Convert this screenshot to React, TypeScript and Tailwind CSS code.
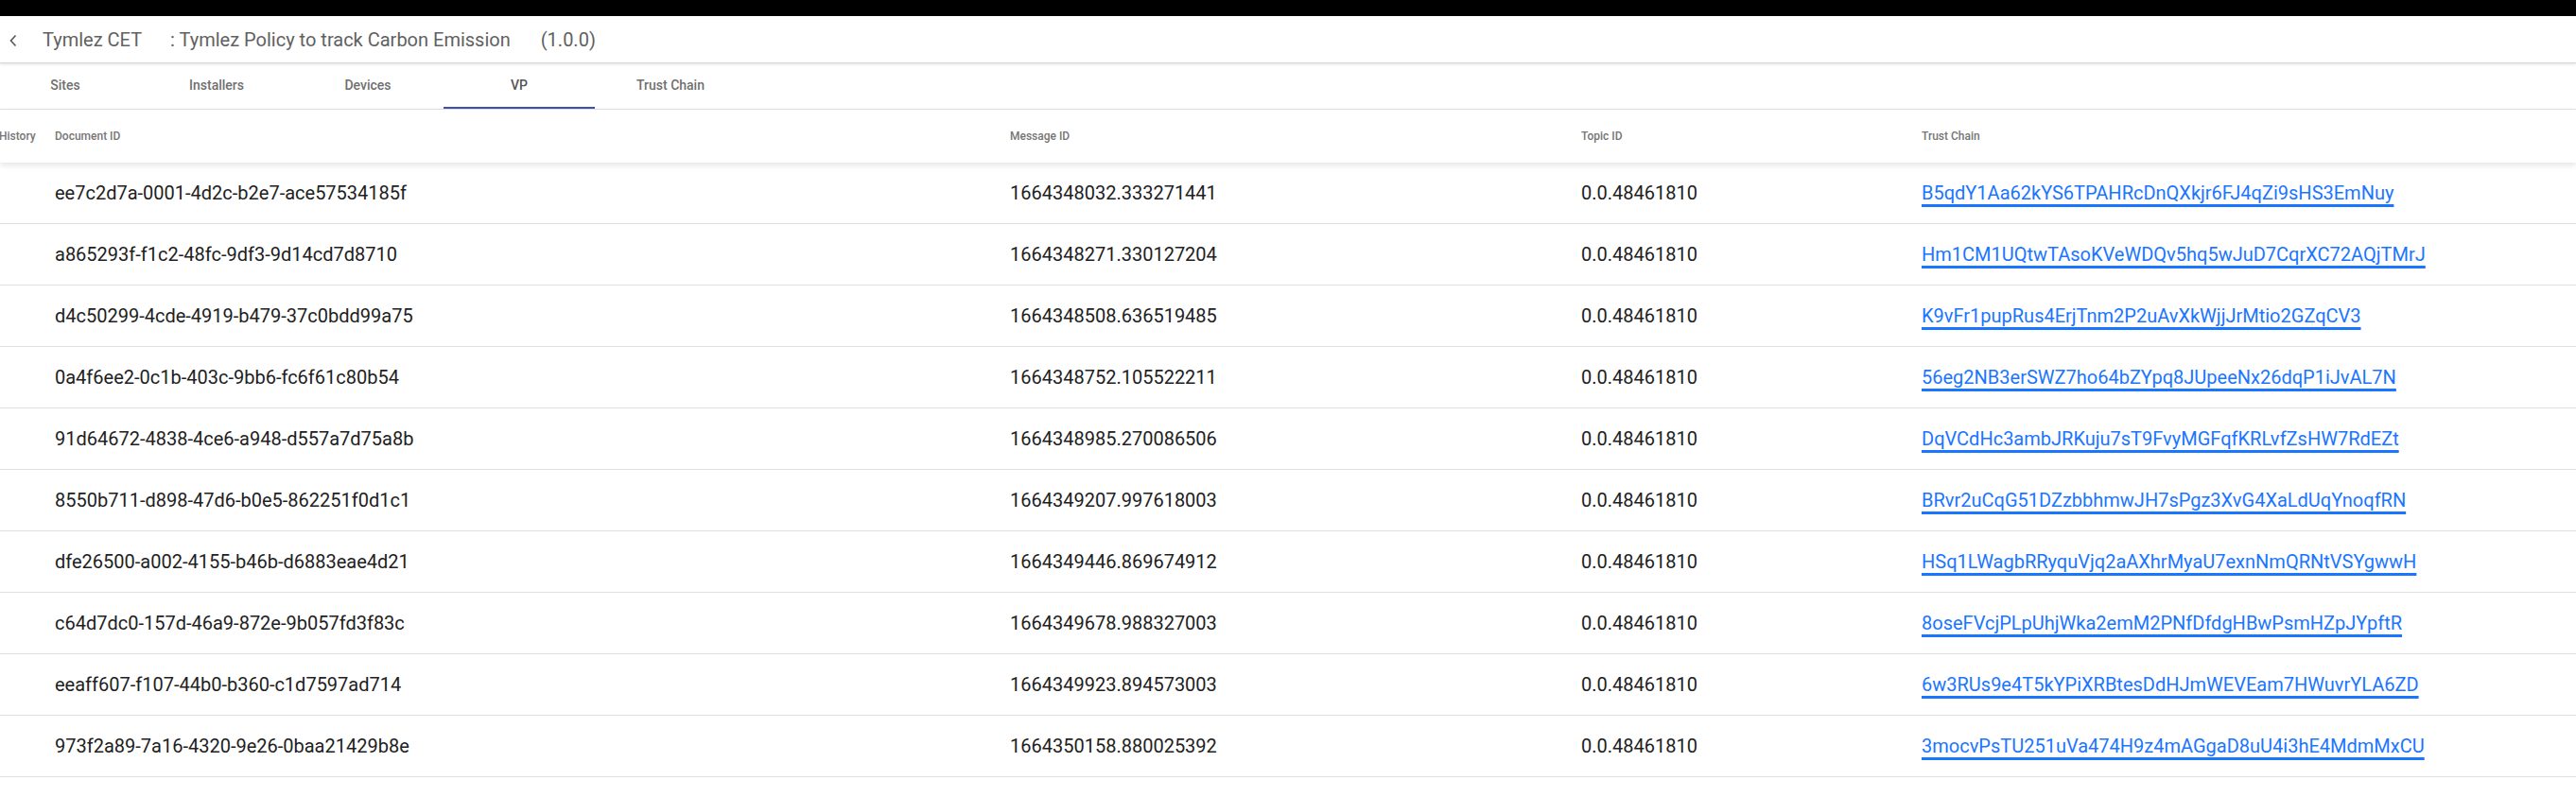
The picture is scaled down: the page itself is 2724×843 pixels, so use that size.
import React from 'react';

const TABS = ['Sites', 'Installers', 'Devices', 'VP', 'Trust Chain'];
const ACTIVE_TAB = 'VP';
const TOPIC = '0.0.48461810';

const ROWS = [
    ['ee7c2d7a-0001-4d2c-b2e7-ace57534185f', '1664348032.333271441', 'B5qdY1Aa62kYS6TPAHRcDnQXkjr6FJ4qZi9sHS3EmNuy'],
    ['a865293f-f1c2-48fc-9df3-9d14cd7d8710', '1664348271.330127204', 'Hm1CM1UQtwTAsoKVeWDQv5hq5wJuD7CqrXC72AQjTMrJ'],
    ['d4c50299-4cde-4919-b479-37c0bdd99a75', '1664348508.636519485', 'K9vFr1pupRus4ErjTnm2P2uAvXkWjjJrMtio2GZqCV3'],
    ['0a4f6ee2-0c1b-403c-9bb6-fc6f61c80b54', '1664348752.105522211', '56eg2NB3erSWZ7ho64bZYpq8JUpeeNx26dqP1iJvAL7N'],
    ['91d64672-4838-4ce6-a948-d557a7d75a8b', '1664348985.270086506', 'DqVCdHc3ambJRKuju7sT9FvyMGFqfKRLvfZsHW7RdEZt'],
    ['8550b711-d898-47d6-b0e5-862251f0d1c1', '1664349207.997618003', 'BRvr2uCqG51DZzbbhmwJH7sPgz3XvG4XaLdUqYnoqfRN'],
    ['dfe26500-a002-4155-b46b-d6883eae4d21', '1664349446.869674912', 'HSq1LWagbRRyquVjq2aAXhrMyaU7exnNmQRNtVSYgwwH'],
    ['c64d7dc0-157d-46a9-872e-9b057fd3f83c', '1664349678.988327003', '8oseFVcjPLpUhjWka2emM2PNfDfdgHBwPsmHZpJYpftR'],
    ['eeaff607-f107-44b0-b360-c1d7597ad714', '1664349923.894573003', '6w3RUs9e4T5kYPiXRBtesDdHJmWEVEam7HWuvrYLA6ZD'],
    ['973f2a89-7a16-4320-9e26-0baa21429b8e', '1664350158.880025392', '3mocvPsTU251uVa474H9z4mAGgaD8uU4i3hE4MdmMxCU'],
];

const COLS = 'grid grid-cols-[58px_1010px_604px_360px_1fr]';

export default function App() {
    return (
        <div className="w-full h-[843px] bg-white overflow-hidden font-['Roboto',sans-serif]">
            {/* window strip */}
            <div className="h-[17px] bg-black" />

            {/* Policy header */}
            <div className="h-[50px] flex items-center border-b border-[#d6d6d6] shadow-[0_1px_3px_rgba(0,0,0,0.12)] text-[20px] text-[#616161] relative z-10">
                <svg width="8" height="14" viewBox="0 0 8 14" className="ml-[10px] mt-[2px]">
                    <path d="M6.5 1.5 L1.5 7 L6.5 12.5" fill="none" stroke="#555" strokeWidth="1.6" />
                </svg>
                <span className="ml-[27px]">Tymlez CET</span>
                <span className="ml-[30px]">: Tymlez Policy to track Carbon Emission</span>
                <span className="ml-[32px]">(1.0.0)</span>
            </div>

            {/* Tabs */}
            <div className="h-[49px] flex border-b border-[#e0e0e0] -ml-[11px]">
                {TABS.map((t) => (
                    <div
                        key={t}
                        className={`w-[160px] flex items-center justify-center text-[14px] font-medium border-b-2 ${
                            t === ACTIVE_TAB ? 'border-[#3f51b5] text-[#555]' : 'border-transparent text-[#6f6f6f]'
                        }`}
                    >
                        {t}
                    </div>
                ))}
            </div>

            {/* Table header */}
            <div className={`${COLS} h-[56px] items-center text-[12px] font-medium text-[#757575] shadow-[0_3px_6px_rgba(0,0,0,0.1)] relative z-10`}>
                <span className="-ml-[1px]">History</span>
                <span>Document ID</span>
                <span>Message ID</span>
                <span>Topic ID</span>
                <span>Trust Chain</span>
            </div>

            {/* Rows */}
            {ROWS.map(([doc, msg, chain]) => (
                <div key={doc} className={`${COLS} h-[65px] items-center border-b border-[#e0e0e0] text-[20px] text-[#212121]`}>
                    <span />
                    <span>{doc}</span>
                    <span>{msg}</span>
                    <span>{TOPIC}</span>
                    <span>
                        <a className="text-[#1a75ff] underline decoration-[3px] underline-offset-[5px] cursor-pointer">{chain}</a>
                    </span>
                </div>
            ))}
        </div>
    );
}
